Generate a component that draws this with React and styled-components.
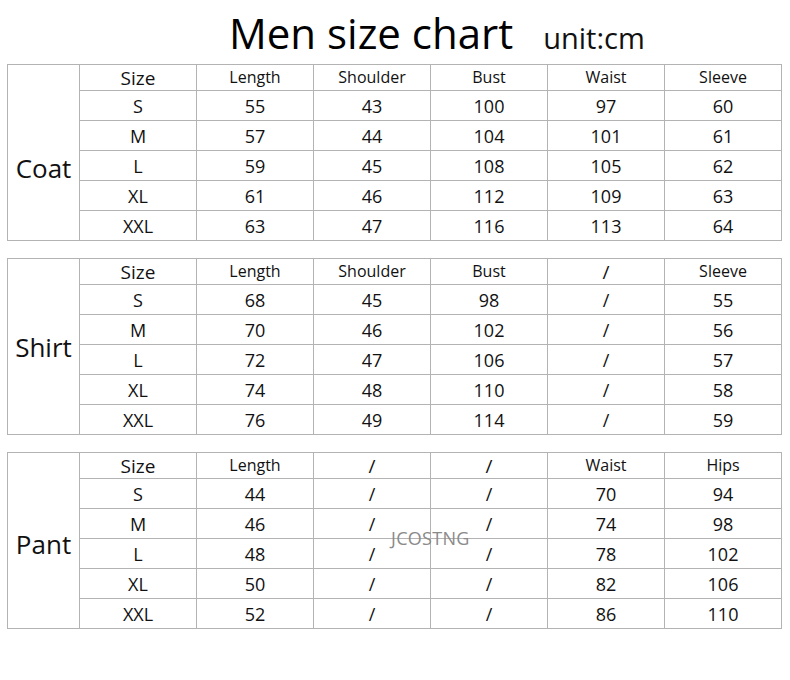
import React from 'react';
import styled, { createGlobalStyle } from 'styled-components';

const GlobalStyle = createGlobalStyle`
  html, body {
    margin: 0;
    padding: 0;
    background: #fff;
  }
  body {
    font-family: "Open Sans", "Noto Sans", sans-serif;
    color: #111;
  }
`;

const Page = styled.div`
  position: relative;
  width: 790px;
  height: 680px;
  background: #fff;
  overflow: hidden;
`;

const TitleRow = styled.div`
  display: flex;
  align-items: baseline;
  gap: 30px;
  height: 64px;
  padding-left: 229px;
  box-sizing: border-box;
`;

const Title = styled.h1`
  margin: 0;
  font-size: 42px;
  font-weight: 400;
  line-height: 66px;
  color: #000;
`;

const Unit = styled.span`
  font-size: 29px;
  color: #111;
`;

const Charts = styled.div`
  display: flex;
  flex-direction: column;
  gap: 17px;
  padding-left: 7px;
`;

const Chart = styled.div`
  display: grid;
  grid-template-columns: 72px repeat(6, 117px);
  grid-template-rows: 26px repeat(5, 30px);
  width: 775px;
  box-sizing: border-box;
  border-top: 1px solid #b3b3b3;
  border-left: 1px solid #b3b3b3;
`;

const Label = styled.div`
  grid-row: 1 / span 6;
  grid-column: 1;
  display: flex;
  align-items: center;
  justify-content: center;
  box-sizing: border-box;
  padding-top: ${p => p.$shift || 0}px;
  border-right: 1px solid #b3b3b3;
  border-bottom: 1px solid #b3b3b3;
  font-size: 26px;
  color: #111;
`;

const Cell = styled.div`
  display: flex;
  align-items: center;
  justify-content: center;
  box-sizing: border-box;
  border-right: 1px solid #b3b3b3;
  border-bottom: 1px solid #b3b3b3;
  font-size: ${p => (p.$head ? (p.$big ? '19px' : '16px') : '18px')};
  padding-bottom: ${p => (p.$head && !p.$big ? '2px' : '0')};
  color: #111;
`;

const Watermark = styled.div`
  position: absolute;
  left: 391px;
  top: 526px;
  font-size: 18px;
  color: #8a8a8a;
  letter-spacing: 0.3px;
`;

const charts = [
  {
    name: 'Coat',
    shift: 30,
    head: ['Size', 'Length', 'Shoulder', 'Bust', 'Waist', 'Sleeve'],
    rows: [
      ['S', '55', '43', '100', '97', '60'],
      ['M', '57', '44', '104', '101', '61'],
      ['L', '59', '45', '108', '105', '62'],
      ['XL', '61', '46', '112', '109', '63'],
      ['XXL', '63', '47', '116', '113', '64'],
    ],
  },
  {
    name: 'Shirt',
    shift: 0,
    head: ['Size', 'Length', 'Shoulder', 'Bust', '/', 'Sleeve'],
    rows: [
      ['S', '68', '45', '98', '/', '55'],
      ['M', '70', '46', '102', '/', '56'],
      ['L', '72', '47', '106', '/', '57'],
      ['XL', '74', '48', '110', '/', '58'],
      ['XXL', '76', '49', '114', '/', '59'],
    ],
  },
  {
    name: 'Pant',
    shift: 6,
    head: ['Size', 'Length', '/', '/', 'Waist', 'Hips'],
    rows: [
      ['S', '44', '/', '/', '70', '94'],
      ['M', '46', '/', '/', '74', '98'],
      ['L', '48', '/', '/', '78', '102'],
      ['XL', '50', '/', '/', '82', '106'],
      ['XXL', '52', '/', '/', '86', '110'],
    ],
  },
];

export default function App() {
  return (
    <Page>
      <GlobalStyle />
      <TitleRow>
        <Title>Men size chart</Title>
        <Unit>unit:cm</Unit>
      </TitleRow>
      <Charts>
        {charts.map(chart => (
          <Chart key={chart.name}>
            <Label $shift={chart.shift}>{chart.name}</Label>
            {chart.head.map((h, i) => (
              <Cell key={'h' + i} $head $big={i === 0 || h === '/'}>{h}</Cell>
            ))}
            {chart.rows.map(row =>
              row.map((v, i) => <Cell key={row[0] + i}>{v}</Cell>)
            )}
          </Chart>
        ))}
      </Charts>
      <Watermark>JCOSTNG</Watermark>
    </Page>
  );
}
